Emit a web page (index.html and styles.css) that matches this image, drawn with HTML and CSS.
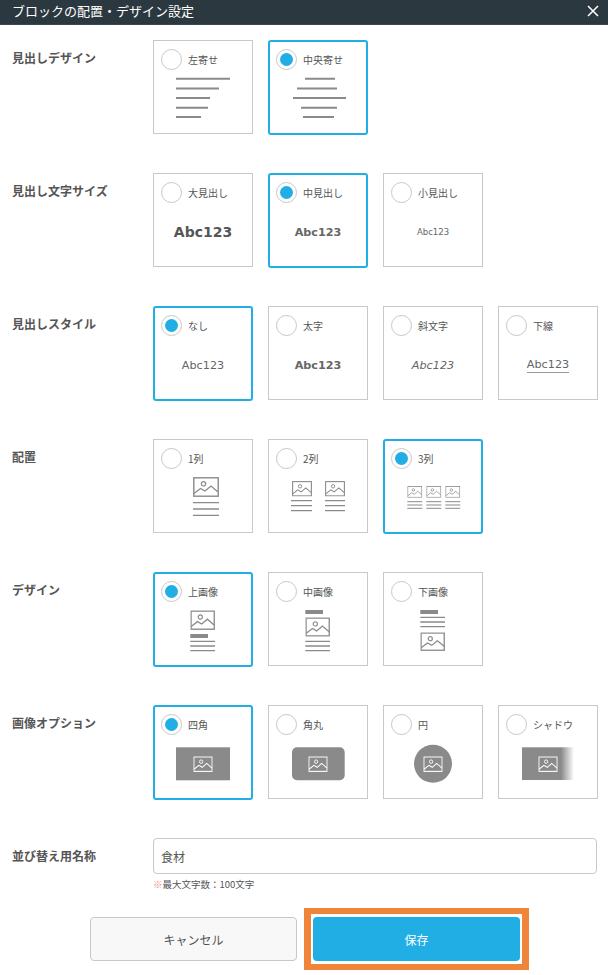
FILE: index.html
```html
<!DOCTYPE html>
<html lang="ja">
<head>
    <meta charset="utf-8">
    <title>ブロックの配置・デザイン設定</title>
    <link rel="stylesheet" href="styles.css">
</head>
<body>
    <svg class="defs" aria-hidden="true">
        <symbol id="pic" viewBox="0 0 26 20" preserveAspectRatio="none">
            <rect x="0.8" y="0.8" width="24.4" height="18.4" fill="none" stroke="currentColor" stroke-width="1.4"/>
            <circle cx="10.5" cy="6.8" r="2.2" fill="none" stroke="currentColor" stroke-width="1.2"/>
            <path d="M1 16.5 L7.5 11.5 L12 14 L18 9 L25 15" fill="none" stroke="currentColor" stroke-width="1.3"/>
        </symbol>
    </svg>

    <div class="header">
        <span>ブロックの配置・デザイン設定</span>
        <svg class="close" width="12" height="12" viewBox="0 0 12 12"><path d="M1 1 L11 11 M11 1 L1 11" stroke="#fff" stroke-width="1.5"/></svg>
    </div>

    <div class="row">
        <div class="label">見出しデザイン</div>
        <div class="cards">
            <div class="card">
                <div class="head"><span class="radio"></span><span class="name">左寄せ</span></div>
                <div class="preview">
                    <svg viewBox="8 30 84 57"><path class="ln2" d="M23 37.7h54M23 47.6h43M23 57h34M23 66.7h32M23 76h25"/></svg>
                </div>
            </div>
            <div class="card selected">
                <div class="head"><span class="radio"></span><span class="name">中央寄せ</span></div>
                <div class="preview">
                    <svg viewBox="8 30 84 57"><path class="ln2" d="M37 37.7h30M29 47.6h40M25 57h53M33 66.7h36M35 76h31"/></svg>
                </div>
            </div>
        </div>
    </div>

    <div class="row">
        <div class="label">見出し文字サイズ</div>
        <div class="cards">
            <div class="card">
                <div class="head"><span class="radio"></span><span class="name">大見出し</span></div>
                <div class="preview"><span class="abc large">Abc123</span></div>
            </div>
            <div class="card selected">
                <div class="head"><span class="radio"></span><span class="name">中見出し</span></div>
                <div class="preview"><span class="abc bold">Abc123</span></div>
            </div>
            <div class="card">
                <div class="head"><span class="radio"></span><span class="name">小見出し</span></div>
                <div class="preview"><span class="abc small">Abc123</span></div>
            </div>
        </div>
    </div>

    <div class="row">
        <div class="label">見出しスタイル</div>
        <div class="cards">
            <div class="card selected">
                <div class="head"><span class="radio"></span><span class="name">なし</span></div>
                <div class="preview"><span class="abc">Abc123</span></div>
            </div>
            <div class="card">
                <div class="head"><span class="radio"></span><span class="name">太字</span></div>
                <div class="preview"><span class="abc bold">Abc123</span></div>
            </div>
            <div class="card">
                <div class="head"><span class="radio"></span><span class="name">斜文字</span></div>
                <div class="preview"><span class="abc italic">Abc123</span></div>
            </div>
            <div class="card">
                <div class="head"><span class="radio"></span><span class="name">下線</span></div>
                <div class="preview"><span class="abc underline">Abc123</span></div>
            </div>
        </div>
    </div>

    <div class="row">
        <div class="label">配置</div>
        <div class="cards">
            <div class="card">
                <div class="head"><span class="radio"></span><span class="name">1列</span></div>
                <div class="preview">
                    <svg viewBox="8 30 84 57">
                        <use href="#pic" x="40" y="37" width="26" height="20"/>
                        <path class="ln" d="M40 62.7h26M40 69h26M40 75.3h26"/>
                    </svg>
                </div>
            </div>
            <div class="card">
                <div class="head"><span class="radio"></span><span class="name">2列</span></div>
                <div class="preview">
                    <svg viewBox="8 30 84 57">
                        <use href="#pic" x="24" y="41" width="20" height="15.5"/>
                        <use href="#pic" x="57" y="41" width="20" height="15.5"/>
                        <path class="ln" d="M23 60.7h21M23 65.7h21M23 70.7h21M57 60.7h20M57 65.7h20M57 70.7h20"/>
                    </svg>
                </div>
            </div>
            <div class="card selected">
                <div class="head"><span class="radio"></span><span class="name">3列</span></div>
                <div class="preview">
                    <svg viewBox="8 30 84 57">
                        <use href="#pic" x="24.3" y="46" width="15" height="11.8"/>
                        <use href="#pic" x="43.3" y="46" width="15" height="11.8"/>
                        <use href="#pic" x="62.3" y="46" width="15" height="11.8"/>
                        <path class="ln thin" d="M24.3 61.7h15M24.3 65h15M24.3 68.3h15M43.3 61.7h15M43.3 65h15M43.3 68.3h15M62.3 61.7h15M62.3 65h15M62.3 68.3h15"/>
                    </svg>
                </div>
            </div>
        </div>
    </div>

    <div class="row">
        <div class="label">デザイン</div>
        <div class="cards">
            <div class="card selected">
                <div class="head"><span class="radio"></span><span class="name">上画像</span></div>
                <div class="preview">
                    <svg viewBox="8 30 84 57">
                        <use href="#pic" x="37.3" y="37.3" width="24.7" height="19.7"/>
                        <path class="ln bar" d="M37.3 63h17.7"/>
                        <path class="ln" d="M37.3 68.3h24.7M37.3 73h24.7M37.3 77.7h24.7"/>
                    </svg>
                </div>
            </div>
            <div class="card">
                <div class="head"><span class="radio"></span><span class="name">中画像</span></div>
                <div class="preview">
                    <svg viewBox="8 30 84 57">
                        <path class="ln bar" d="M37.3 39h17.7"/>
                        <use href="#pic" x="37.3" y="44.3" width="24.7" height="19.4"/>
                        <path class="ln" d="M37.3 68.3h24.7M37.3 73h24.7M37.3 77.7h24.7"/>
                    </svg>
                </div>
            </div>
            <div class="card">
                <div class="head"><span class="radio"></span><span class="name">下画像</span></div>
                <div class="preview">
                    <svg viewBox="8 30 84 57">
                        <path class="ln bar" d="M37.3 39h17.7"/>
                        <path class="ln" d="M37.3 44.3h24.7M37.3 49h24.7M37.3 53.7h24.7"/>
                        <use href="#pic" x="37.3" y="59.3" width="24.7" height="18.7"/>
                    </svg>
                </div>
            </div>
        </div>
    </div>

    <div class="row">
        <div class="label">画像オプション</div>
        <div class="cards">
            <div class="card selected">
                <div class="head"><span class="radio"></span><span class="name">四角</span></div>
                <div class="preview">
                    <svg viewBox="8 30 84 57">
                        <rect class="shape" x="23" y="41.3" width="54" height="33"/>
                        <use class="white" href="#pic" x="40.3" y="50.3" width="19.4" height="15.7"/>
                    </svg>
                </div>
            </div>
            <div class="card">
                <div class="head"><span class="radio"></span><span class="name">角丸</span></div>
                <div class="preview">
                    <svg viewBox="8 30 84 57">
                        <rect class="shape" x="24" y="41.3" width="52.7" height="33" rx="5"/>
                        <use class="white" href="#pic" x="40.3" y="50.3" width="19.4" height="15.7"/>
                    </svg>
                </div>
            </div>
            <div class="card">
                <div class="head"><span class="radio"></span><span class="name">円</span></div>
                <div class="preview">
                    <svg viewBox="8 30 84 57">
                        <circle class="shape" cx="50" cy="57.7" r="19"/>
                        <use class="white" href="#pic" x="40.3" y="50.3" width="19.4" height="15.7"/>
                    </svg>
                </div>
            </div>
            <div class="card">
                <div class="head"><span class="radio"></span><span class="name">シャドウ</span></div>
                <div class="preview">
                    <svg viewBox="8 30 84 57">
                        <defs>
                            <linearGradient id="fade">
                                <stop offset="0.75" stop-color="#8a8a8a"/>
                                <stop offset="1" stop-color="#8a8a8a" stop-opacity="0"/>
                            </linearGradient>
                        </defs>
                        <rect x="24" y="41.3" width="52" height="32.7" fill="url(#fade)"/>
                        <use class="white" href="#pic" x="40.3" y="50.3" width="19.4" height="15.7"/>
                    </svg>
                </div>
            </div>
        </div>
    </div>

    <div class="sort-row">
        <div class="sort-label">並び替え用名称</div>
        <div class="sort-field">
            <input class="text-input" type="text" value="食材">
            <div class="note"><span class="mark">※</span>最大文字数：100文字</div>
        </div>
    </div>

    <div class="footer">
        <button class="btn cancel" type="button">キャンセル</button>
        <div class="highlight">
            <button class="btn save" type="button">保存</button>
        </div>
    </div>
</body>
</html>
```

FILE: styles.css
```css
* {
    box-sizing: border-box;
}

body {
    margin: 0;
    height: 975px;
    overflow: hidden;
    font-family: "Noto Sans CJK JP", "Noto Sans", sans-serif;
    color: #555;
    background-color: #fff;
}

.defs {
    display: block;
    width: 0;
    height: 0;
}

.header {
    display: flex;
    justify-content: space-between;
    align-items: center;
    height: 25px;
    margin-bottom: 15px;
    padding: 0 9px 3px 12px;
    font-size: 13px;
    color: #fff;
    background-color: #2c3840;
    border-bottom: 1px solid #3a464d;
}

.row {
    display: flex;
    margin-bottom: 38px;
}

.label {
    width: 153px;
    padding: 9px 0 0 12px;
    font-size: 12px;
    line-height: 18px;
    font-weight: bold;
}

.cards {
    display: flex;
    align-items: flex-start;
    gap: 15px;
}

.card {
    display: flex;
    flex-direction: column;
    width: 100px;
    height: 94px;
    padding: 8px 7px 6px;
    border: 1px solid #c8c8c8;
}

.card.selected {
    height: 95px;
    padding: 7px 6px 6px;
    border: 2px solid #21aee5;
    border-radius: 3px;
}

.head {
    display: flex;
    align-items: center;
    gap: 6px;
    height: 21px;
    margin-bottom: 1px;
}

.radio {
    display: flex;
    justify-content: center;
    align-items: center;
    width: 21px;
    height: 21px;
    border: 1px solid #c8c8c8;
    border-radius: 50%;
}

.selected .radio::after {
    content: "";
    width: 13px;
    height: 13px;
    border-radius: 50%;
    background-color: #21aee5;
}

.name {
    font-size: 10px;
    color: #555;
}

.preview {
    flex: 1;
    display: flex;
    justify-content: center;
    align-items: center;
    color: #8a8a8a;
}

.preview svg {
    display: block;
    width: 84px;
    height: 57px;
}

.ln,
.ln2 {
    fill: none;
    stroke: #8a8a8a;
    stroke-width: 1.3;
}

.ln2 {
    stroke-width: 2;
}

.ln.thin {
    stroke-width: 1;
}

.ln.bar {
    stroke-width: 4;
}

.shape {
    fill: #8a8a8a;
}

.white {
    color: #fff;
}

.abc {
    font-family: "DejaVu Sans", sans-serif;
    font-size: 11.2px;
    color: #666;
}

.abc.large {
    font-size: 14px;
    font-weight: bold;
    color: #555;
}

.abc.bold {
    font-weight: bold;
}

.abc.small {
    font-size: 8.5px;
}

.abc.italic {
    font-style: italic;
}

.abc.underline {
    padding-bottom: 1px;
    border-bottom: 1px solid #999;
}

.sort-row {
    display: flex;
}

.sort-label {
    width: 153px;
    padding: 9px 0 0 12px;
    font-size: 12px;
    line-height: 18px;
    font-weight: bold;
}

.sort-field {
    width: 444px;
}

.text-input {
    display: block;
    width: 100%;
    height: 36px;
    padding: 0 7px;
    font-family: inherit;
    font-size: 12px;
    color: #555;
    border: 1px solid #c8c8c8;
    border-radius: 4px;
    background-color: #fff;
}

.note {
    margin-top: 3px;
    font-size: 9.5px;
    line-height: 14px;
}

.mark {
    color: #ee8a8a;
}

.footer {
    display: flex;
    align-items: center;
    gap: 7px;
    margin-top: 17px;
    padding-left: 90px;
}

.btn {
    height: 44px;
    font-family: inherit;
    font-size: 12px;
    border-radius: 4px;
    cursor: pointer;
}

.cancel {
    width: 207px;
    color: #555;
    background-color: #f8f8f8;
    border: 1px solid #c8c8c8;
}

.highlight {
    padding: 3px 2px;
    background-color: #fff;
    border: 6px solid #f0853a;
    border-left-width: 7px;
    border-right-width: 7px;
}

.save {
    display: block;
    width: 207px;
    color: #fff;
    background-color: #21aee5;
    border: none;
}
```
